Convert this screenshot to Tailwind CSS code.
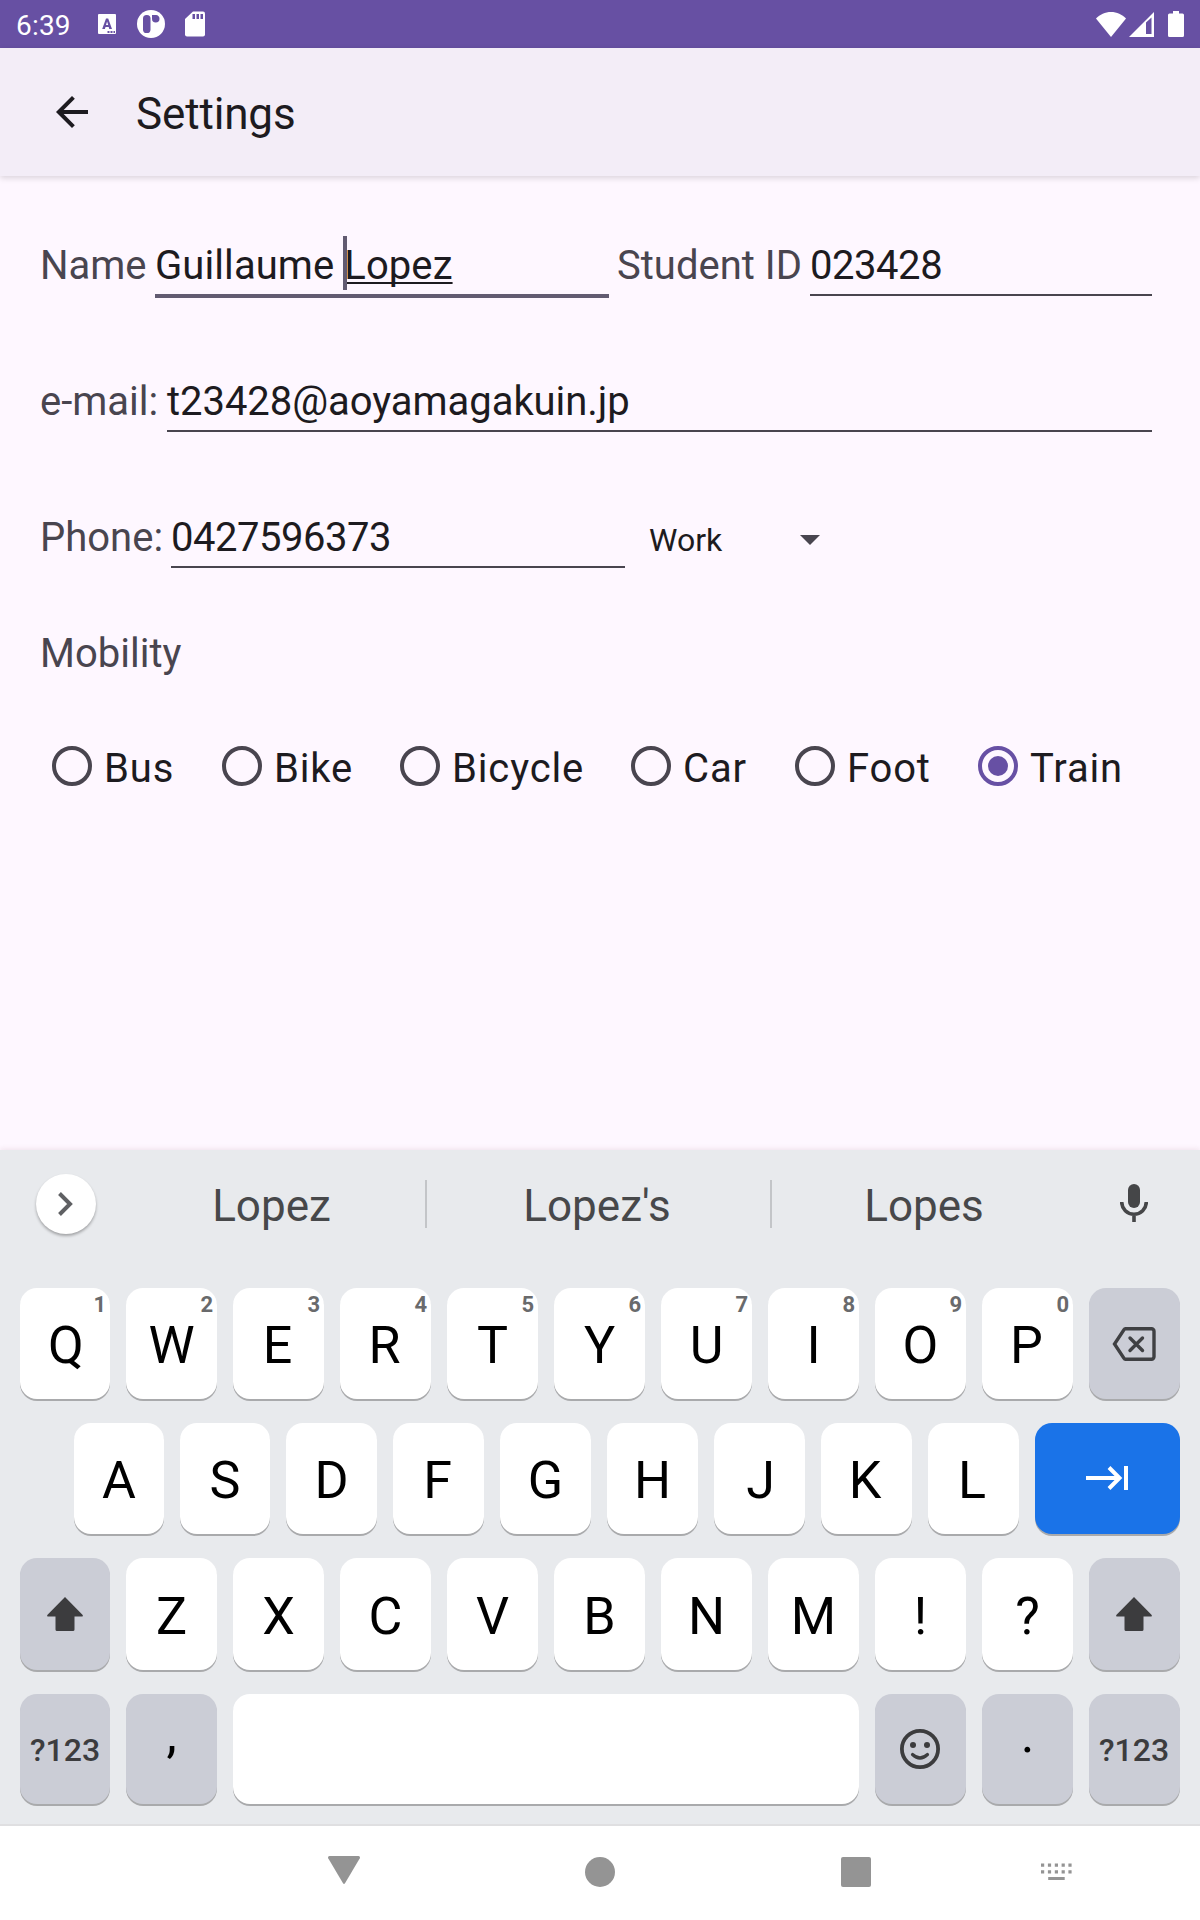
<!DOCTYPE html>
<html lang="en">
<head>
<meta charset="utf-8">
<title>Settings</title>
<script src="https://cdn.jsdelivr.net/npm/@tailwindcss/browser@4"></script>
</head>
<body class="w-[1200px] h-[1920px] overflow-hidden bg-[#fef7ff] text-[#1d1b20] font-['Roboto',sans-serif] flex flex-col">

<!-- Status bar -->
<header class="h-12 shrink-0 bg-[#6750a3] text-white flex items-center pl-4 pr-4">
  <span class="text-[28px] leading-[48px] w-[82px] pt-1 tracking-[0.2px]">6:39</span>
  <svg class="w-[18px] h-5" viewBox="0 0 18 20"><rect width="18" height="20" rx="1" fill="#fff"/><path d="M4.200 15L8 4.500h2.200L14 15h-2.700l-.6-1.900H7.500l-.6 1.900zM8 11h2.200L9.100 7.600z" fill="#6750a3" fill-rule="evenodd"/><path d="M9.500 17h2v2h-2zM12.500 17h2v2h-2zM15.500 17h1.500v2h-1.500z" fill="#6750a3"/></svg>
  <svg class="w-7 h-7 ml-[21px]" viewBox="0 0 28 28"><circle cx="14" cy="14" r="14" fill="#fff"/><rect x="6" y="5" width="7.500" height="18" rx="3.600" fill="#6750a3"/><path d="M15 5h4a3.500 3.500 0 0 1 3.500 3.800a3.700 3.700 0 0 1-7.500 0z" fill="#6750a3"/></svg>
  <svg class="w-5 h-[26px] ml-5" viewBox="0 0 20 26"><path d="M8 .5h10a2 2 0 0 1 2 2V23.500a2 2 0 0 1-2 2H2a2 2 0 0 1-2-2V8z" fill="#fff"/><path d="M7.500 3H10v5H7.500zM11.500 3H14v5h-2.500zM15.500 3H18v5h-2.500z" fill="#6750a3"/></svg>
  <div class="flex-1"></div>
  <svg class="w-[30px] h-[25px]" viewBox="0 0 30 25"><path d="M0 6.500C4 2.500 9 0 15 0s11 2.500 15 6.500L15 25z" fill="#fff"/></svg>
  <svg class="w-[25px] h-[25px] ml-[3px]" viewBox="0 0 25 25"><path d="M25 0v25H0z" fill="#fff"/><path d="M17 10.500L22.500 5.500V22h-5.500z" fill="#6750a3"/></svg>
  <svg class="w-4 h-[26px] ml-[14px]" viewBox="0 0 16 26"><path d="M5 0h6v2.500h3.500A1.500 1.500 0 0 1 16 4v20.500a1.500 1.500 0 0 1-1.500 1.500h-13A1.500 1.500 0 0 1 0 24.500V4a1.500 1.500 0 0 1 1.500-1.500H5z" fill="#fff"/></svg>
</header>

<!-- App bar -->
<div class="h-32 shrink-0 bg-[#f3edf7] flex items-center pl-12 shadow-[0_2px_6px_rgba(0,0,0,0.15)]">
  <svg class="w-12 h-12" viewBox="0 0 24 24" fill="#1d1b20"><path d="M20 11H7.830l5.590-5.590L12 4l-8 8 8 8 1.410-1.410L7.830 13H20v-2z"/></svg>
  <h1 class="text-[44px] leading-[56px] ml-10 pt-1 tracking-[-0.15px]">Settings</h1>
</div>

<!-- Form -->
<main class="h-[974px] shrink-0 pt-[62px] px-10 text-[40px] leading-[56px] whitespace-nowrap">
  <div class="flex items-start h-[136px]">
    <label class="w-[107px] text-[#49454f]">Name</label>
    <div class="mx-2 w-[454px] h-[60px] border-b-4 border-[#625b71] tracking-[0.08px]">Guillaume <span class="relative underline decoration-2 underline-offset-[3px] [text-decoration-skip-ink:none]">Lopez<i class="absolute -left-[1px] -top-[6px] w-1 h-[54px] bg-[#625b71]"></i></span></div>
    <label class="w-[185px] text-[#49454f]">Student ID</label>
    <div class="mx-2 flex-1 h-[58px] border-b-2 border-[#49454f] tracking-[-0.45px]">023428</div>
  </div>
  <div class="flex items-start h-[136px]">
    <label class="w-[119px] text-[#49454f]">e-mail:</label>
    <div class="mx-2 flex-1 h-[58px] border-b-2 border-[#49454f] tracking-[-0.05px]">t23428@aoyamagakuin.jp</div>
  </div>
  <div class="flex items-start h-[116px]">
    <label class="w-[123px] text-[#49454f]">Phone:</label>
    <div class="mx-2 w-[454px] h-[58px] border-b-2 border-[#49454f] tracking-[-0.48px]">0427596373</div>
    <div class="ml-4 w-[151px] text-[32px] leading-[60px]">Work</div>
    <svg class="w-5 h-[10px] mt-[25px]" viewBox="0 0 20 10"><path d="M0 0h20L10 10z" fill="#49454f"/></svg>
  </div>
  <div class="h-[120px] text-[#49454f]">Mobility</div>
  <div class="flex pl-3 tracking-[0.85px] [&>div]:flex [&>div]:gap-3 [&_i]:block [&_i]:w-10 [&_i]:h-10 [&_i]:rounded-full [&_i]:border-4 [&_i]:border-[#49454f] [&_span]:-mt-[5px]">
    <div class="w-[170px]"><i></i><span>Bus</span></div>
    <div class="w-[178px]"><i></i><span>Bike</span></div>
    <div class="w-[231px]"><i></i><span>Bicycle</span></div>
    <div class="w-[164px]"><i></i><span>Car</span></div>
    <div class="w-[183px]"><i></i><span>Foot</span></div>
    <div><b class="w-10 h-10 rounded-full border-4 border-[#6750a4] grid place-items-center"><b class="w-5 h-5 rounded-full bg-[#6750a4]"></b></b><span>Train</span></div>
  </div>
</main>

<!-- Keyboard -->
<section class="h-[676px] shrink-0 bg-[#e8eaed] border-b-2 border-[#dfdfe1] px-5 shadow-[0_-1px_5px_rgba(120,40,60,0.1)]">
  <div class="h-[138px] flex items-start text-[44px] leading-[56px] text-[#47484a]">
    <div class="ml-4 mt-6 w-[60px] h-[60px] rounded-full bg-white shadow-[0_2px_3px_rgba(0,0,0,0.3)] grid place-items-center">
      <svg class="w-4 h-6" viewBox="0 0 16 24" fill="none" stroke="#5f6063" stroke-width="4"><path d="M1.500 1.500L12 12L1.500 22.500"/></svg>
    </div>
    <span class="w-[329px] pl-[22px] mt-7 text-center">Lopez</span>
    <i class="w-[2px] h-12 bg-[#c3c5c8] mt-[30px]"></i>
    <span class="w-[343px] pr-[3px] mt-7 text-center">Lopez's</span>
    <i class="w-[2px] h-12 bg-[#c3c5c8] mt-[30px]"></i>
    <span class="w-[304px] mt-7 text-center">Lopes</span>
    <svg class="w-7 h-[38px] mt-[34px] ml-[44px]" viewBox="0 0 28 38"><rect x="8" width="12" height="24" rx="6" fill="#454648"/><path d="M1.700 18a12.300 12.300 0 0 0 24.600 0M14 30v8" fill="none" stroke="#454648" stroke-width="3.600"/></svg>
  </div>

  <div class="flex gap-4 h-[135px] text-[52px] leading-[60px] text-black [&>div]:relative [&>div]:w-[91px] [&>div]:h-[111px] [&>div]:pt-[5px] [&>div]:rounded-[17px] [&>div]:bg-white [&>div]:shadow-[0_2px_0_#a9aaac] [&>div]:flex [&>div]:items-center [&>div]:justify-center [&_sup]:absolute [&_sup]:top-[9px] [&_sup]:right-1 [&_sup]:text-[22px] [&_sup]:leading-[16px] [&_sup]:font-bold [&_sup]:text-[#696a6c]">
    <div class="w-[90px]! pl-[2px]">Q<sup>1</sup></div>
    <div>W<sup>2</sup></div>
    <div class="pr-[2px]">E<sup>3</sup></div>
    <div class="pr-[2px]">R<sup>4</sup></div>
    <div>T<sup>5</sup></div>
    <div>Y<sup>6</sup></div>
    <div>U<sup>7</sup></div>
    <div>I<sup>8</sup></div>
    <div>O<sup>9</sup></div>
    <div class="pr-[2px]">P<sup>0</sup></div>
    <div class="bg-[#cbcdd6]! pt-0! pr-[2px]"><svg class="w-11 h-[34px]" viewBox="0 0 44 34" fill="none" stroke="#3f4043" stroke-width="3.400"><path d="M13.500 1.700H39.500a2.500 2.500 0 0 1 2.500 2.500V29.800a2.500 2.500 0 0 1-2.500 2.500H13.500q-1 0-1.500-1L2.500 17L12 2.700q.5-1 1.500-1z"/><path d="M18 11l12.500 12.500M30.500 11L18 23.500" stroke-linecap="round"/></svg></div>
  </div>

  <div class="flex gap-4 h-[135px] pl-[54px] text-[52px] leading-[60px] text-black [&>div]:w-[91px] [&>div]:h-[111px] [&>div]:pt-[5px] [&>div]:rounded-[17px] [&>div]:bg-white [&>div]:shadow-[0_2px_0_#a9aaac] [&>div]:flex [&>div]:items-center [&>div]:justify-center">
    <div class="w-[90px]!">A</div>
    <div class="w-[90px]!">S</div>
    <div>D</div>
    <div class="pr-[2px]">F</div>
    <div>G</div>
    <div>H</div>
    <div class="pl-[2px]">J</div>
    <div class="pr-[3px]">K</div>
    <div class="pr-[3px]">L</div>
    <div class="w-[145px]! bg-[#1a73e8]! pt-0! pr-[2px] pb-[2px]"><svg class="w-[42px] h-6" viewBox="0 0 42 24" fill="none" stroke="#fff" stroke-width="4"><path d="M0 12H34M23 1.500L33.500 12L23 22.500M40 0V24"/></svg></div>
  </div>

  <div class="flex gap-4 h-[136px] text-[52px] leading-[60px] text-black [&>div]:w-[91px] [&>div]:h-[112px] [&>div]:pt-[6px] [&>div]:rounded-[17px] [&>div]:bg-white [&>div]:shadow-[0_2px_0_#a9aaac] [&>div]:flex [&>div]:items-center [&>div]:justify-center">
    <div class="w-[90px]! bg-[#cbcdd6]! pt-0!"><svg class="w-9 h-[34px]" viewBox="0 0 36 34"><path d="M18 0L35.700 18q.5 1.500-1 1.500H27.500V32.500a1.500 1.500 0 0 1-1.500 1.500H10a1.500 1.500 0 0 1-1.500-1.500V19.500H1.300Q-.2 19.500.3 18z" fill="#3c3c3e"/></svg></div>
    <div>Z</div>
    <div>X</div>
    <div>C</div>
    <div>V</div>
    <div>B</div>
    <div>N</div>
    <div>M</div>
    <div>!</div>
    <div>?</div>
    <div class="bg-[#cbcdd6]! pt-0! pr-[2px]"><svg class="w-9 h-[34px]" viewBox="0 0 36 34"><path d="M18 0L35.700 18q.5 1.500-1 1.500H27.500V32.500a1.500 1.500 0 0 1-1.500 1.500H10a1.500 1.500 0 0 1-1.500-1.500V19.500H1.300Q-.2 19.500.3 18z" fill="#3c3c3e"/></svg></div>
  </div>

  <div class="flex gap-4 text-black [&>div]:w-[91px] [&>div]:h-[110px] [&>div]:rounded-[17px] [&>div]:bg-[#cbcdd6] [&>div]:shadow-[0_2px_0_#a9aaac] [&>div]:flex [&>div]:items-center [&>div]:justify-center">
    <div class="w-[90px]! text-[32px] font-medium text-[#3c3c3e] pt-[2px]">?123</div>
    <div class="text-[52px] leading-[60px] pb-[28px]">,</div>
    <div class="w-[626px]! bg-white!"></div>
    <div class="pr-[2px]"><svg class="w-10 h-10" viewBox="0 0 40 40" fill="none" stroke="#3c3c3e" stroke-width="3.800"><circle cx="20" cy="20" r="18.100"/><path d="M12.500 25.500Q20 32.500 27.500 25.500" stroke-linecap="round" stroke-width="3.200"/><g fill="#3c3c3e" stroke="none"><circle cx="13" cy="16" r="3"/><circle cx="27" cy="16" r="3"/></g></svg></div>
    <div class="text-[52px] leading-[60px] pb-[28px]">.</div>
    <div class="text-[32px] font-medium text-[#3c3c3e] pt-[2px] pr-[1px]">?123</div>
  </div>
</section>

<!-- Navigation bar -->
<nav class="h-[94px] shrink-0 bg-white flex items-start pl-[328px]">
  <svg class="w-8 h-7 mt-[30px]" viewBox="0 0 32 28" fill="#949494"><path d="M1.500 0h29a1.500 1.500 0 0 1 1.300 2.200L17 27.200q-1 1.500-2 0L.2 2.200A1.500 1.500 0 0 1 1.500 0z"/></svg>
  <i class="w-[30px] h-[30px] mt-[31px] ml-[225px] rounded-full bg-[#949494]"></i>
  <i class="w-[30px] h-[30px] mt-[31px] ml-[226px] rounded-[2px] bg-[#949494]"></i>
  <svg class="w-[31px] h-[18px] mt-[37px] ml-[170px]" viewBox="0 0 31 18" fill="#949494"><path d="M0 .5h3.200v3.200H0zM6.900.5h3.200v3.200H6.900zM13.800.5h3.200v3.200h-3.200zM20.600.5h3.200v3.200h-3.200zM27.400.5h3.200v3.200h-3.200zM0 7.200h3.200v3.200H0zM6.900 7.200h3.200v3.200H6.900zM13.800 7.200h3.200v3.200h-3.200zM20.600 7.200h3.200v3.200h-3.200zM27.400 7.200h3.200v3.200h-3.200zM7.200 14h16.500v3H7.200z"/></svg>
</nav>
</body>
</html>
